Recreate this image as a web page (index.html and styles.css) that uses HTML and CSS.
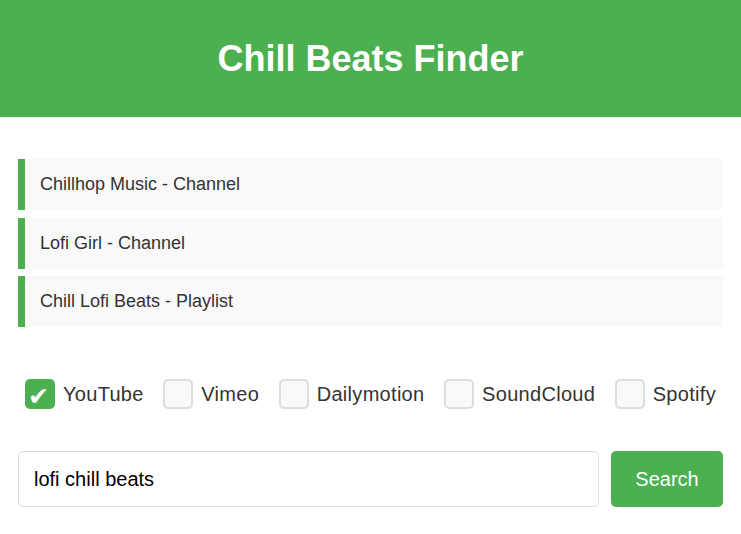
FILE: index.html
```html
<!DOCTYPE html>
<html>
<head>
<meta charset="utf-8">
<link rel="stylesheet" href="styles.css">
</head>
<body>
<header class="header"><h1 class="title">Chill Beats Finder</h1></header>
<main class="main">
  <ul class="results">
    <li class="result">Chillhop Music - Channel</li>
    <li class="result">Lofi Girl - Channel</li>
    <li class="result">Chill Lofi Beats - Playlist</li>
  </ul>
  <div class="platforms">
    <label class="platform"><span class="box checked"><span class="tick">✔</span></span><span class="name">YouTube</span></label>
    <label class="platform"><span class="box"></span><span class="name">Vimeo</span></label>
    <label class="platform"><span class="box"></span><span class="name">Dailymotion</span></label>
    <label class="platform"><span class="box"></span><span class="name">SoundCloud</span></label>
    <label class="platform"><span class="box"></span><span class="name">Spotify</span></label>
  </div>
  <div class="search">
    <input class="query" type="text" value="lofi chill beats">
    <button class="button">Search</button>
  </div>
</main>
</body>
</html>
```
FILE: styles.css
```css
html, body {
  margin: 0;
  padding: 0;
  background: #fff;
  font-family: "Liberation Sans", Arial, sans-serif;
  color: #333;
}
.header {
  background: #4CAF50;
  height: 117px;
  display: flex;
  align-items: center;
  justify-content: center;
}
.title {
  margin: 0;
  color: #fff;
  font-size: 36px;
  font-weight: bold;
  line-height: 40px;
}
.main {
  padding: 42px 18px 0;
}
.results {
  list-style: none;
  margin: 0;
  padding: 0;
  display: flex;
  flex-direction: column;
  gap: 7.5px;
}
.result {
  background: #f9f9f9;
  border-left: 7px solid #4CAF50;
  padding: 15px 15px;
  font-size: 18px;
  line-height: 21px;
  color: #333;
}
.platforms {
  margin-top: 52px;
  padding: 0 7px;
  display: flex;
  justify-content: space-between;
  align-items: center;
  height: 30px;
}
.platform {
  display: flex;
  align-items: center;
  gap: 8px;
  font-size: 20px;
  color: #333;
  letter-spacing: 0.3px;
}
.box {
  width: 26px;
  height: 26px;
  border: 2px solid #ddd;
  border-radius: 5px;
  background: #f9f9f9;
  display: flex;
  align-items: center;
  justify-content: center;
}
.box.checked {
  background: #4CAF50;
  border-color: #4CAF50;
}
.tick {
  color: #fff;
  font-family: "DejaVu Sans", sans-serif;
  font-size: 25px;
  line-height: 1;
  margin: 4px 3px 0 0;
}
.search {
  margin-top: 42px;
  display: flex;
  gap: 12px;
}
.query {
  flex: 1;
  box-sizing: border-box;
  height: 56px;
  border: 1px solid #ddd;
  border-radius: 5px;
  padding: 0 15px;
  font-family: "Liberation Sans", Arial, sans-serif;
  font-size: 20px;
  color: #000;
  outline: none;
  margin: 0;
}
.button {
  box-sizing: border-box;
  height: 56px;
  width: 112px;
  border: none;
  border-radius: 5px;
  background: #4CAF50;
  color: #fff;
  font-family: "Liberation Sans", Arial, sans-serif;
  font-size: 20px;
  margin: 0;
  padding: 0;
}
```
